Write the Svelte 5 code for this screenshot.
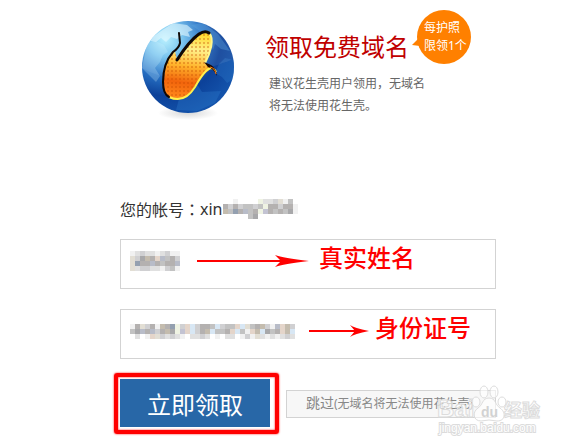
<script>
  let fullName = $state('');
  let idNumber = $state('');

  // masked values: one string per row, one character per 5px cell
  const shades = {
    a: '#a8a8aa', b: '#b4b1b0', c: '#c2c2c2', d: '#d0d0d2', e: '#e0e0e0', f: '#f1f1f1',
    p: '#e4d5ca', q: '#d8e7f4', r: '#94a0b0', s: '#b8bcc8', t: '#c4bcae', u: '#e2ded4',
    v: '#eff3e3', w: '#c3c3d2', x: '#9d948e'
  };

  const accountMask = [
    '  f    veedufc ',
    'bdbdccdcvbbdbbf',
    'tcrbscbvwbcbcaf',
    '     ca        '
  ];
  const nameMask = [
    'fedeefedff',
    'udatbpscbd',
    'urbbsbcbbs',
    'ueddeefdcf'
  ];
  const idMask = [
    'fbudbftbrvdpqdbbcqdccpqucbtdfsptd',
    'casbsdbtavwpqdbtqccbpqcfptqacbptq',
    ' e fpudedef eede f ee fdfuefefede'
  ];
</script>

{#snippet mask(rows, label)}
  <svg class="mask" width={rows[0].length * 5} height={rows.length * 5} shape-rendering="crispEdges" role="img" aria-label={label}>
    {#each rows as row, y}
      {#each row as cell, x}
        {#if cell !== ' '}
          <rect x={x * 5} y={y * 5} width="5" height="5" fill={shades[cell]} />
        {/if}
      {/each}
    {/each}
  </svg>
{/snippet}

<main>
  <header>
    <svg class="logo" viewBox="0 0 92 104" aria-hidden="true">
      <defs>
        <radialGradient id="globe" cx="25%" cy="20%" r="85%">
          <stop offset="0" stop-color="#b5f0ff" />
          <stop offset=".22" stop-color="#72c2ee" />
          <stop offset=".45" stop-color="#2a76c8" />
          <stop offset=".72" stop-color="#0c4199" />
          <stop offset="1" stop-color="#1352aa" />
        </radialGradient>
        <linearGradient id="corn" x1=".5" y1="0" x2=".4" y2="1">
          <stop offset="0" stop-color="#ffd92e" />
          <stop offset=".25" stop-color="#fff08a" />
          <stop offset=".5" stop-color="#ffb52c" />
          <stop offset=".75" stop-color="#f2640c" />
          <stop offset="1" stop-color="#ff8a1c" />
        </linearGradient>
        <pattern id="kernels" width="4" height="4" patternUnits="userSpaceOnUse">
          <rect x="1" y="1" width="2" height="2" fill="#c64a00" opacity=".35" />
        </pattern>
        <radialGradient id="shadow">
          <stop offset="0" stop-color="#d8d8d8" />
          <stop offset="1" stop-color="#fff" />
        </radialGradient>
        <clipPath id="ball"><circle cx="46" cy="46" r="46" /></clipPath>
      </defs>
      <ellipse cx="46" cy="92" rx="30" ry="7" fill="url(#shadow)" />
      <circle cx="46" cy="46" r="46" fill="url(#globe)" />
      <g clip-path="url(#ball)">
        <path d="M12 15l10-7 9-6 14 2 6 5-5 2 2 5-8-2-5 4-6-2-5 5-5-4-5 4-6-1z" fill="#e2f8ff" opacity=".6" />
        <path d="M5 22l9-2 8 4 4 7-5 3-3 7-5 6 5 8-4 6-8-8-6-6z" fill="#d4f4ff" opacity=".25" />
        <path d="M49 4 61 2l15 11 12 17-9-2-6-5-2 6-4-12-8-6z" fill="#57a3e0" opacity=".35" />
        <path d="M77 43l6-6 9 2v19l-7 4-5-6-7-4z" fill="#2e7bca" opacity=".35" />
        <path d="M37 78l11-5 7-10 5 8 19-1-6 12-18 8-21-1z" fill="#2e7bca" opacity=".35" />
        <path d="M0 47q25 15 53 5t39-14V0H0z" fill="#fff" opacity=".08" />
      </g>
      <path d="M31 30C25 36 22 48 22 60C22 70 23 76 31 78C41 80 47 74 52 66C56 60 62 52 70 47L63 42C67 34 73 20 67 12C60 8 51 16 46 22L35 39 33 30z" fill="url(#corn)" />
      <path d="M31 30C25 36 22 48 22 60C22 70 23 76 31 78C41 80 47 74 52 66C56 60 62 52 70 47L63 42C67 34 73 20 67 12C60 8 51 16 46 22L35 39 33 30z" fill="url(#kernels)" />
      <path d="M67 12C73 18 68 33 63 42" fill="none" stroke="#fff68d" stroke-width="2" />
      <path d="M27 76C40 82 48 74 53 66C57 59 63 48 69 47Q72 47 74 51" fill="none" stroke="#fff04d" stroke-width="2" />
      <path d="M35 39Q47 20 57 13Q63 9 67 12" fill="none" stroke="#100805" stroke-width="3" stroke-linecap="round" />
      <path d="M37 12l1 10q-1 5-7 9C24 39 21 50 21 61Q21 73 27 76" fill="none" stroke="#100805" stroke-width="2" stroke-linecap="round" />
      <path d="M62 41l7 3q5 3 6 11-4-8-9-9z" fill="#1a0905" />
      <path d="M68 46q5 1 6 7" fill="none" stroke="#ff7a12" stroke-width="1" />
    </svg>
    <div class="intro">
      <div class="title-row">
        <h1>领取免费域名</h1>
        <div class="badge">每护照<br />限领1个</div>
      </div>
      <p>建议花生壳用户领用，无域名<br />将无法使用花生壳。</p>
    </div>
  </header>

  <form onsubmit={(e) => e.preventDefault()}>
    <div class="account">
      您的帐号<span class="colon">：</span>xin{@render mask(accountMask, '帐号')}
    </div>

    <div class="field">
      <input aria-label="真实姓名" bind:value={fullName} />
      <div class="note">
        {@render mask(nameMask, '姓名')}
        <svg class="arrow long" width="114" height="12" aria-hidden="true">
          <path d="M0 6h90" stroke="#f00" stroke-width="2" />
          <path d="M78 0q8 3 34 6-26 3-34 6l6-6z" fill="#f00" />
        </svg>
        <span>真实姓名</span>
      </div>
    </div>

    <div class="field">
      <input aria-label="身份证号" bind:value={idNumber} />
      <div class="note">
        {@render mask(idMask, '证号')}
        <svg class="arrow" width="60" height="12" aria-hidden="true">
          <path d="M0 6h46" stroke="#f00" stroke-width="2" />
          <path d="M41 0q4 3 19 6-15 3-19 6l5-6z" fill="#f00" />
        </svg>
        <span>身份证号</span>
      </div>
    </div>

    <div class="actions">
      <div class="highlight">
        <button class="submit" type="submit">立即领取</button>
      </div>
      <button class="skip" type="button">跳过<small>(无域名将无法使用花生壳)</small></button>
    </div>
  </form>

  <svg class="watermark" width="108" height="56" aria-hidden="true">
    <g fill="#fff" fill-opacity=".6" stroke="#dcdcdc" stroke-width="1">
      <text class="brand" x="0" y="34">Bai</text>
      <ellipse cx="39" cy="19" rx="4" ry="5" />
      <ellipse cx="47" cy="9" rx="4" ry="6" />
      <ellipse cx="57" cy="9" rx="4" ry="6" />
      <ellipse cx="65" cy="19" rx="4" ry="5" />
      <path d="M52 15c-7 0-6 7-11 10-6 4-5 13 3 13q8-2 16 0c9 0 9-9 3-13-5-3-4-10-11-10z" />
      <text class="du" x="44" y="34">du</text>
      <text class="cjk" x="67" y="34">经验</text>
      <text class="url" x="2" y="49">jingyan.baidu.com</text>
    </g>
  </svg>
</main>

<style>
  :global(body) {
    margin: 0;
    background: #fff;
  }
  main {
    position: relative;
    min-height: 447px;
    font-family: "Noto Sans", "Noto Sans CJK SC", sans-serif;
    color: #333;
  }
  h1, p { margin: 0; font-weight: normal; }

  header {
    display: flex;
    gap: 31px;
    padding: 21px 0 0 142px;
  }
  .logo {
    flex: none;
    width: 92px;
    height: 104px;
  }
  .intro { padding-top: 8px; }
  .title-row {
    position: relative;
    width: 144px;
  }
  h1 {
    color: #c00000;
    font-size: 24px;
    line-height: 36px;
    white-space: nowrap;
  }
  .badge {
    position: absolute;
    left: 152px;
    top: -19px;
    box-sizing: border-box;
    width: 54px;
    height: 54px;
    padding: 9px 0 0 7px;
    border-radius: 50%;
    background: #ff8000;
    color: #fff;
    font-size: 12px;
    line-height: 18px;
    white-space: nowrap;
  }
  .badge::before {
    content: '';
    position: absolute;
    left: -5px;
    top: 27px;
    border: solid transparent;
    border-width: 8px 8px 1px 0;
    border-right-color: #ff8000;
  }
  .intro p {
    margin: 8px 0 0 4px;
    color: #666;
    font-size: 12px;
    line-height: 22px;
  }

  form {
    margin: 71px 75px 0 120px;
  }
  .account {
    display: flex;
    align-items: center;
    height: 26px;
    margin-bottom: 17px;
    font-size: 16px;
  }
  .colon { font-family: "Noto Sans CJK TC", sans-serif; }
  .mask { flex: none; }
  .field {
    position: relative;
    margin-bottom: 20px;
  }
  .field input {
    display: block;
    box-sizing: border-box;
    width: 100%;
    height: 50px;
    padding: 0 10px;
    border: 1px solid #d3d3d3;
    background: #fff;
    font-family: inherit;
    font-size: 14px;
  }
  .note {
    position: absolute;
    left: 10px;
    top: 4px;
    display: flex;
    align-items: center;
    height: 36px;
    color: #f00;
    font-size: 24px;
    font-weight: 500;
    white-space: nowrap;
    pointer-events: none;
  }
  .note span {
    padding-bottom: 8px;
    font-family: "Noto Sans CJK SC", sans-serif;
    line-height: 26px;
  }
  .arrow { margin: 0 6px 0 14px; }
  .arrow.long { margin: 0 8px 0 17px; }

  .actions {
    display: flex;
    align-items: center;
    gap: 7px;
    margin: -6px 0 0 -6px;
  }
  .highlight {
    flex: none;
    padding: 2px 5px 3px 2px;
    border: 4px solid #f00;
    border-radius: 3px;
    box-shadow: 0 0 2px #f00, inset 0 0 2px #f00;
  }
  .submit {
    display: block;
    width: 150px;
    height: 48px;
    padding: 0;
    border: 0;
    background: #2867a7;
    color: #fff;
    font-family: inherit;
    font-size: 24px;
  }
  .skip {
    flex: 1;
    height: 28px;
    padding: 0 0 0 19px;
    border: 1px solid #d3d3d3;
    background: #f7f7f7;
    color: #888;
    font-family: inherit;
    font-size: 14px;
    line-height: 24px;
    text-align: left;
    white-space: nowrap;
  }
  .skip small { font-size: 12px; }

  .watermark {
    position: absolute;
    right: 26px;
    bottom: 8px;
    pointer-events: none;
  }
  .watermark text { font-family: "Liberation Sans", "Noto Sans CJK SC", sans-serif; }
  .watermark .brand { font-size: 24px; font-weight: bold; }
  .watermark .du {
    font-size: 14px;
    font-weight: bold;
    fill: #d2d2d2;
    stroke: none;
    fill-opacity: 1;
  }
  .watermark .cjk { font-size: 18px; font-weight: bold; }
  .watermark .url {
    font-size: 12px;
    fill-opacity: 1;
    paint-order: stroke;
    stroke-width: 2px;
  }
</style>
